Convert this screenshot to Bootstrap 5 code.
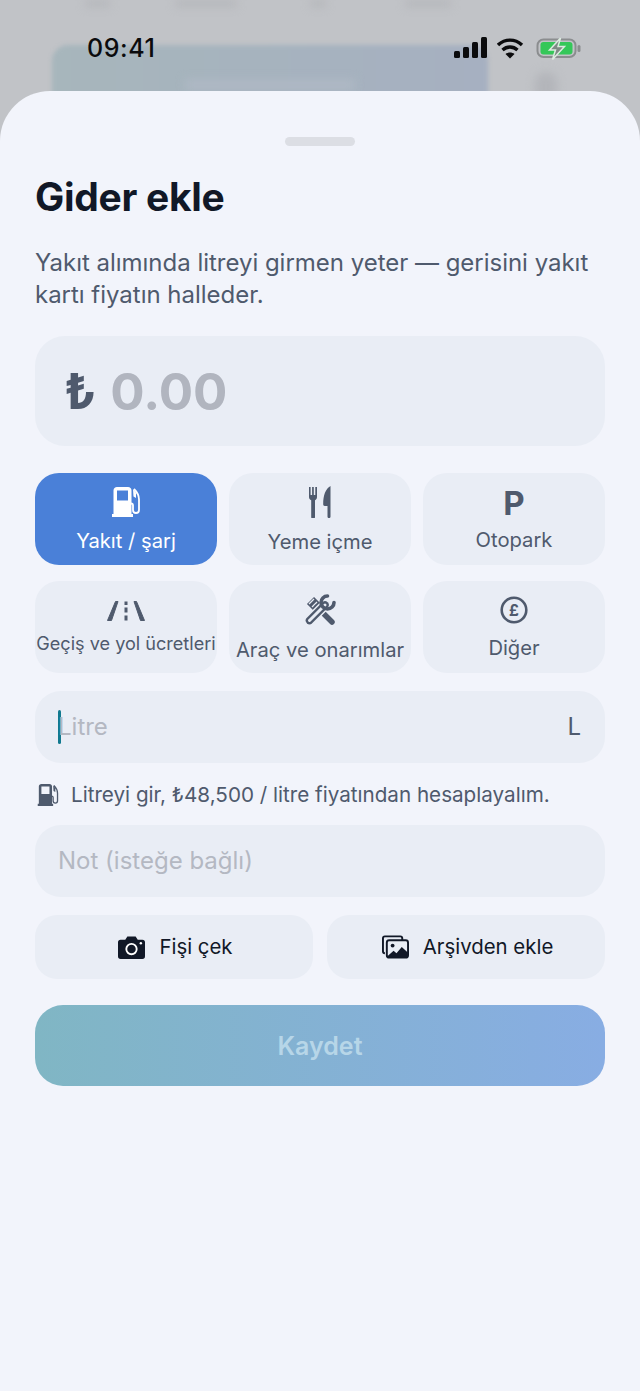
<!DOCTYPE html>
<html lang="tr">
<head>
  <meta charset="UTF-8" />
  <meta name="viewport" content="width=device-width, initial-scale=1.0" />
  <title>Gider ekle</title>
  <link href="https://cdn.jsdelivr.net/npm/bootstrap@5.3.3/dist/css/bootstrap.min.css" rel="stylesheet" />
  <style>
    html, body { height: 100%; }
    body { font-family: Inter, "Noto Sans", sans-serif; background: #c1c3c7; overflow: hidden; position: relative; color: #4f5a6d; }
    .behind-card { position: absolute; left: 52px; top: 45px; width: 436px; height: 90px; border-radius: 16px; background: linear-gradient(90deg, #a7b6bc, #a6b0c1); filter: blur(2px); }
    .behind-dot { position: absolute; left: 535px; top: 72px; width: 22px; height: 30px; border-radius: 11px; background: #b3b5ba; filter: blur(5px); }
    .behind-bar { position: absolute; height: 7px; background: #b5b7bb; filter: blur(4px); top: 0; }
    .behind-label { position: absolute; left: 185px; top: 79px; width: 170px; height: 12px; background: #aeb8c4; filter: blur(4px); }
    .status-row { position: relative; height: 91px; padding: 33px 58px 0 87px; }
    .status-time { font-size: 25px; font-weight: 500; line-height: 30px; color: #0b0b0d; letter-spacing: .6px; }
    .status-signal { margin-right: 9px; }
    .status-wifi { margin-right: 11px; }
    .sheet { position: relative; height: 1300px; background: #f2f4fb; border-radius: 50px 50px 0 0; padding: 46px 35px 0; }
    .grab { width: 70px; height: 9px; border-radius: 5px; background: #dcdee4; margin: 0 auto 28px; }
    .sheet-title { font-size: 39px; line-height: 46px; font-weight: 700; color: #111827; margin: 0 0 27px; letter-spacing: -.3px; }
    .sheet-desc { font-size: 24px; line-height: 32px; color: #4f5a6d; margin: 0 0 25px; letter-spacing: -.02px; }
    .amount-box { height: 110px; border-radius: 30px; background: #e9edf5; padding: 0 29px; gap: 14px; margin-bottom: 27px; }
    .lira { font-size: 50px; font-weight: 700; color: #4f5a6d; line-height: 1; }
    .amount-val { font-size: 51px; font-weight: 700; color: #b1b5bf; line-height: 1; }
    .cat-grid { display: grid; grid-template-columns: repeat(3, 182px); grid-auto-rows: 92px; column-gap: 12px; row-gap: 16px; margin-bottom: 18px; }
    .cat-tile { border-radius: 24px; background: #e9edf5; color: #4f5a6d; font-size: 20.2px; line-height: 26px; white-space: nowrap; padding-top: 3px; gap: 11px; }
    .cat-tile.active { background: #4a80d8; color: #fff; }
    .cat-tile.tile-road { font-size: 18.1px; gap: 9px; }
    .cat-tile.tile-park { padding-top: 0; gap: 7px; }
    .p-glyph { font-size: 33px; font-weight: 700; line-height: 34px; }
    .field-box { height: 72px; border-radius: 26px; background: #e9edf5; padding: 0 24px 0 23px; font-size: 24px; color: #b4b8c2; }
    .caret-bar { width: 3px; height: 34px; border-radius: 2px; background: #11798f; margin-right: -3px; }
    .field-unit { color: #4f5a6d; }
    .hint-row { height: 62px; gap: 12px; padding: 2px 0 0 2px; font-size: 20.65px; color: #4f5a6d; white-space: nowrap; }
    .btn-row { gap: 14px; margin: 18px 0 26px; }
    .attach-btn { flex: 1 1 0; height: 64px; border-radius: 22px; background: #e9edf5; color: #111827; font-size: 20.4px; gap: 14px; padding-left: 3px; }
    .save-btn { height: 81px; border-radius: 28px; background: linear-gradient(90deg, #80b6c4, #88ade3); color: #b7d6e8; font-size: 25px; font-weight: 600; padding-top: 2px; }
  </style>
</head>
<body>
  <div class="behind-bar" style="left: 85px; width: 25px"></div>
  <div class="behind-bar" style="left: 175px; width: 62px"></div>
  <div class="behind-bar" style="left: 310px; width: 16px"></div>
  <div class="behind-bar" style="left: 405px; width: 46px"></div>
  <div class="behind-card"></div>
  <div class="behind-label"></div>
  <div class="behind-dot"></div>

  <div class="status-row d-flex justify-content-between">
    <span class="status-time">09:41</span>
    <div class="d-flex align-items-start">
      <svg width="34" height="22" viewBox="0 0 34 22" class="status-signal mt-1" fill="#0b0b0d"><rect x="0" y="14" width="6" height="7" rx="1.5"/><rect x="9" y="10" width="6" height="11" rx="1.5"/><rect x="18" y="5" width="6" height="16" rx="1.5"/><rect x="27" y="0" width="6" height="21" rx="1.5"/></svg>
      <svg width="28" height="22" viewBox="1 0 28 22" class="status-wifi mt-1" fill="none" stroke="#0b0b0d" stroke-width="3.400"><path d="M2 8c7-6.500 17-6.500 24 0"/><path d="M6.500 13c4.500-4 10.500-4 15 0"/><path d="M14 21.500l-4.500-4.500c2.500-2 6.500-2 9 0z" fill="#0b0b0d" stroke="none"/></svg>
      <svg width="46" height="24" viewBox="0 0 46 24" class="mt-1"><rect x="1.500" y="2.500" width="38" height="17.500" rx="6" fill="none" stroke="#8b8d8f" stroke-width="2"/><rect x="4.500" y="5" width="32" height="12.500" rx="3" fill="#35c759"/><rect x="41.500" y="8" width="3" height="7" rx="1.500" fill="#8b8d8f"/><path d="M24.500 1l-11 12h6l-3 9.500 12-13h-6.500z" fill="#7f8a85" stroke="#dcebe0" stroke-width="1.500"/></svg>
    </div>
  </div>

  <div class="sheet">
    <div class="grab"></div>
    <h1 class="sheet-title">Gider ekle</h1>
    <p class="sheet-desc">Yakıt alımında litreyi girmen yeter — gerisini yakıt kartı fiyatın halleder.</p>

    <div class="amount-box d-flex align-items-center">
      <span class="lira">₺</span>
      <span class="amount-val">0.00</span>
    </div>

    <div class="cat-grid">
      <div class="cat-tile active d-flex flex-column align-items-center justify-content-center">
        <svg width="30" height="30" viewBox="0 0 30 30" fill="#fff"><path fill-rule="evenodd" d="M2.500 3.500C2.500 1.500 4 0 6 0h11c2 0 3.500 1.500 3.500 3.500V27h1.500v3H1v-3h1.500zM6 3.500v10h11v-10z"/><path d="M23 2c3.500 3.500 5 6.500 5 10.500V23a3 3 0 0 1-6 0v-4.500c0-1.500-.5-2-2-2" fill="none" stroke="#fff" stroke-width="1.800"/><path d="M22 2l3 3.500v5.500l-2.500-1.500z"/></svg>
        <span>Yakıt / şarj</span>
      </div>
      <div class="cat-tile d-flex flex-column align-items-center justify-content-center">
        <svg width="22" height="32" viewBox="0 0 22 32" fill="#4f5a6d"><path d="M0 1h1.600v8h1.500V1h1.700v8h1.500V1H8v10c0 1.700-1 2.800-2 3.300V31a1.900 1.900 0 0 1-3.800 0V14.300C1 13.800 0 12.700 0 11z"/><path d="M21.500 0v30.500a1.500 1.500 0 0 1-3 .2V20h-2.800c-1 0-1.500-.7-1.500-1.700C14.200 9 16.500 3 21.500 0z"/></svg>
        <span>Yeme içme</span>
      </div>
      <div class="cat-tile tile-park d-flex flex-column align-items-center justify-content-center">
        <span class="p-glyph">P</span>
        <span>Otopark</span>
      </div>
      <div class="cat-tile tile-road d-flex flex-column align-items-center justify-content-center">
        <svg width="38" height="20" viewBox="0 0 38 20" fill="#4f5a6d" stroke="#4f5a6d" stroke-width="1" stroke-linejoin="round"><path d="M8.500.5h2.500L4.500 19.500H.5z"/><path d="M27 .5h2.500l8 19h-4z"/><rect x="17.500" y=".5" width="3" height="3.500" stroke="none"/><rect x="17.500" y="6.500" width="3" height="5" stroke="none"/><rect x="17.500" y="14.500" width="3" height="5" stroke="none"/></svg>
        <span>Geçiş ve yol ücretleri</span>
      </div>
      <div class="cat-tile d-flex flex-column align-items-center justify-content-center">
        <svg width="32" height="32" viewBox="0 0 32 32" fill="none">
          <path d="M6.500 6.500L13 13" stroke="#4f5a6d" stroke-width="10"/>
          <path d="M5 10l5-5M8 13l5-5" stroke="#e9edf5" stroke-width="1.300"/>
          <path d="M13 13L28 28" stroke="#4f5a6d" stroke-width="5.500" stroke-linecap="round"/>
          <path d="M5.500 26.500L21 11" stroke="#e9edf5" stroke-width="10.500" stroke-linecap="round"/>
          <path d="M5.500 26.500L21 11" stroke="#4f5a6d" stroke-width="7.500" stroke-linecap="round"/>
          <path d="M5.500 26.500L21 11" stroke="#e9edf5" stroke-width="3" stroke-linecap="round"/>
          <path d="M30 8.500a6.500 6.500 0 1 1-6.500-6.500" stroke="#4f5a6d" stroke-width="3.600" stroke-linecap="round"/>
        </svg>
        <span>Araç ve onarımlar</span>
      </div>
      <div class="cat-tile d-flex flex-column align-items-center justify-content-center">
        <svg width="28" height="28" viewBox="0 0 28 28"><circle cx="14" cy="14" r="12.300" fill="none" stroke="#4f5a6d" stroke-width="2.600"/><text x="14" y="19.500" text-anchor="middle" font-family="Inter" font-size="15.500" font-weight="700" fill="#4f5a6d">£</text></svg>
        <span>Diğer</span>
      </div>
    </div>

    <div class="field-box d-flex align-items-center">
      <span class="caret-bar"></span>
      <span class="flex-grow-1">Litre</span>
      <span class="field-unit">L</span>
    </div>

    <div class="hint-row d-flex align-items-center">
      <svg width="22" height="22" viewBox="0 0 30 30" fill="#4f5a6d"><path fill-rule="evenodd" d="M2.500 3.500C2.500 1.500 4 0 6 0h11c2 0 3.500 1.500 3.500 3.500V27h1.500v3H1v-3h1.500zM6 3.500v10h11v-10z"/><path d="M23 2c3.500 3.500 5 6.500 5 10.500V23a3 3 0 0 1-6 0v-4.500c0-1.500-.5-2-2-2" fill="none" stroke="#4f5a6d" stroke-width="1.800"/><path d="M22 2l3 3.500v5.500l-2.500-1.500z"/></svg>
      <span>Litreyi gir, ₺48,500 / litre fiyatından hesaplayalım.</span>
    </div>

    <div class="field-box d-flex align-items-center">Not (isteğe bağlı)</div>

    <div class="btn-row d-flex">
      <div class="attach-btn d-flex align-items-center justify-content-center">
        <svg width="27" height="23" viewBox="0 0 26 22"><path d="M2.500 3.500H7L9 .5h8l2 3h4.500A2.500 2.500 0 0 1 26 6v13.500a2.500 2.500 0 0 1-2.500 2.500h-21A2.500 2.500 0 0 1 0 19.500V6a2.500 2.500 0 0 1 2.500-2.500z" fill="#111827"/><circle cx="13" cy="12.500" r="5" fill="none" stroke="#fff" stroke-width="1.800"/><circle cx="22" cy="7" r="1.200" fill="#fff"/></svg>
        <span>Fişi çek</span>
      </div>
      <div class="attach-btn d-flex align-items-center justify-content-center">
        <svg width="27" height="24" viewBox="0 0 28 24"><path d="M3 18.500A2 2 0 0 1 1 16.500V3a2 2 0 0 1 2-2h16a2 2 0 0 1 2 2v2" fill="none" stroke="#111827" stroke-width="2"/><rect x="5" y="5" width="22" height="18" rx="2.500" fill="#e9edf5" stroke="#111827" stroke-width="2"/><circle cx="11" cy="10.500" r="2" fill="#111827"/><path d="M5 22l7-6 3 2.500 5.500-6.500L27 18v3a2 2 0 0 1-2 2H6z" fill="#111827"/></svg>
        <span>Arşivden ekle</span>
      </div>
    </div>

    <div class="save-btn d-flex align-items-center justify-content-center">Kaydet</div>
  </div>
  <script src="https://cdn.jsdelivr.net/npm/bootstrap@5.3.3/dist/js/bootstrap.bundle.min.js"></script>
</body>
</html>
